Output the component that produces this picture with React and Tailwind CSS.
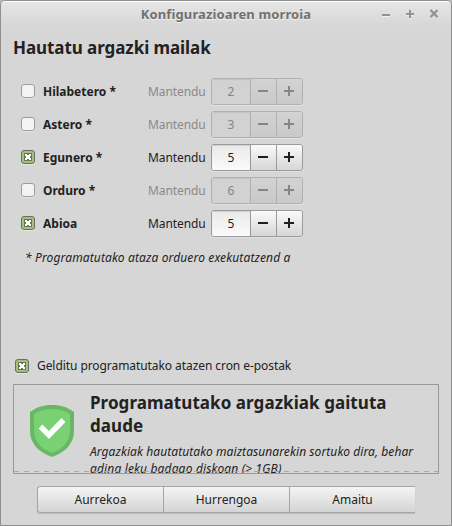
import React from "react";

function Checkbox({ checked }) {
  return (
    <span
      className={
        "flex h-[14px] w-[14px] shrink-0 items-center justify-center rounded-[3px] border shadow-[0_1px_0_#e6e6e6] " +
        (checked ? "border-[#6b6b6b] bg-[#a3c07f]" : "border-[#9c9c9c] bg-[#f3f3f3]")
      }
    >
      {checked && (
        <svg width="12" height="12" viewBox="0 0 12 12" shapeRendering="crispEdges">
          <rect x="2" y="2" width="8" height="8" fill="#68784f" />
          <path d="M3 3h2v1h2V3h2v2H8v2h1v2H7V8H5v1H3V7h1V5H3z" fill="#fff" />
        </svg>
      )}
    </span>
  );
}

function SpinButton({ value, disabled }) {
  const edge = disabled ? "border-[#b0b0b0]" : "border-[#9a9a9a]";
  const ink = disabled ? "#858585" : "#1e1e1e";
  const face = disabled
    ? "bg-gradient-to-b from-[#d3d3d3] to-[#c9c9c9]"
    : "bg-gradient-to-b from-[#fafafa] to-[#d6d6d6]";
  return (
    <div className={"flex h-[27px] w-[92px] overflow-hidden rounded-[3px] border shadow-[0_1px_0_#e2e2e2] " + edge}>
      <div
        className={
          "flex w-[38px] items-center justify-center " +
          (disabled
            ? "bg-[#d2d2d2] text-[#858585] shadow-[inset_0_1px_1px_#c3c3c3]"
            : "bg-gradient-to-b from-[#e9e9e9] to-[#fbfbfb] text-[#222] shadow-[inset_0_1px_1px_#d0d0d0]")
        }
      >
        {value}
      </div>
      <div className={"flex w-[26px] items-start border-l pl-[6px] pt-[6px] " + edge + " " + face}>
        <svg width="12" height="12" viewBox="0 0 12 12" shapeRendering="crispEdges">
          <rect x="1" y="5" width="10" height="2" fill={ink} />
        </svg>
      </div>
      <div className={"flex w-[26px] items-start border-l pl-[6px] pt-[6px] " + edge + " " + face}>
        <svg width="12" height="12" viewBox="0 0 12 12" shapeRendering="crispEdges">
          <path d="M1 5h4V1h2v4h4v2H7v4H5V7H1z" fill={ink} />
        </svg>
      </div>
    </div>
  );
}

const levels = [
  { label: "Hilabetero *", keep: 2, on: false },
  { label: "Astero *", keep: 3, on: false },
  { label: "Egunero *", keep: 5, on: true },
  { label: "Orduro *", keep: 6, on: false },
  { label: "Abioa", keep: 5, on: true },
];

function Shield() {
  return (
    <svg width="44" height="52" viewBox="0 0 44 52">
      <path d="M22 0C31 0 38 2.500 44 7v19c0 13-10 22-22 26C10 48 0 39 0 26V7C6 2.500 13 0 22 0z" fill="#69b764" />
      <path d="M22 4c7 0 13 1.700 18 5v17c0 11-8 18-18 22C12 44 4 37 4 26V9c5-3.300 11-5 18-5z" fill="#79d174" />
      <path d="M10.500 21.500l8.500 8.500L33.500 15" fill="none" stroke="#fff" strokeWidth="5.500" />
    </svg>
  );
}

export default function App() {
  return (
    <div className="h-[526px] w-[452px] bg-[#b8b8b8] font-['Noto_Sans',sans-serif] text-[12px] leading-[17px] text-[#222]">
      <div className="flex h-full flex-col overflow-hidden whitespace-nowrap rounded-t-[5px] border border-[#8f8f8f] bg-[#d6d6d6]">
        <header className="flex h-[26px] shrink-0 items-center border-t border-white bg-gradient-to-b from-[#e6e6e6] to-[#d6d6d6] pr-[11px]">
          <h1 className="flex-1 pl-[71px] text-center text-[13px] font-bold tracking-[0.13px] text-[#707070] [text-shadow:0_1px_0_#f0f0f0]">
            Konfigurazioaren morroia
          </h1>
          <svg className="-mt-px" width="60" height="14" viewBox="0 0 60 14" fill="none" stroke="#929292">
            <path d="M2 9h8M26 8h8M30 4v8" stroke="#f0f0f0" strokeWidth="2" />
            <path d="M2 8h8M26 7h8M30 3v8" strokeWidth="2" />
            <path d="M50.500 3l7 7M57.500 3l-7 7" strokeWidth="2.200" />
          </svg>
        </header>
        <h2 className="mt-[9px] h-[24px] pl-[12px] text-[17px] font-bold leading-[24px] tracking-[-0.07px]">
          Hautatu argazki mailak
        </h2>
        <div className="mt-[18px] flex flex-col gap-[6px] pl-[20px]">
          {levels.map((l) => (
            <div key={l.label} className="flex h-[27px] items-center">
              <div className="h-full pt-[6px]">
                <Checkbox checked={l.on} />
              </div>
              <span className="w-[105px] pl-[8px] font-bold">{l.label}</span>
              <span className={"w-[71px] pl-[8px] tracking-[-0.1px] " + (l.on ? "text-[#222]" : "text-[#8a8a8a]")}>
                Mantendu
              </span>
              <SpinButton value={l.keep} disabled={!l.on} />
            </div>
          ))}
        </div>
        <p className="mt-[12px] pl-[24px] italic tracking-[0.13px]">* Programatutako ataza orduero exekutatzend a</p>
        <div className="mt-[91px] flex h-[17px] items-start pl-[14px]">
          <div className="pt-[2px]">
            <Checkbox checked />
          </div>
          <span className="pl-[8px] tracking-[-0.07px]">Gelditu programatutako atazen cron e-postak</span>
        </div>
        <section className="relative ml-[12px] mt-[10px] flex h-[90px] w-[426px] shrink-0 overflow-hidden border border-[#999] pl-[16px]">
          <svg className="absolute bottom-[1px] left-0" width="424" height="1">
            <path d="M0 .5h424" stroke="#aaa" strokeDasharray="5 5" />
          </svg>
          <div className="mt-[20px] w-[60px] shrink-0">
            <Shield />
          </div>
          <div className="pt-[6px]">
            <h3 className="text-[17px] font-bold leading-[23px] tracking-[0.06px]">
              Programatutako argazkiak gaituta
              <br />
              daude
            </h3>
            <p className="mt-[6px] italic tracking-[0.08px]">
              Argazkiak hautatutako maiztasunarekin sortuko dira, behar
              <br />
              <span className="tracking-[0.15px]">adina leku badago diskoan (&gt; 1GB)</span>
            </p>
          </div>
        </section>
        <footer className="ml-[36px] mt-[12px] flex h-[27px] w-[378px] shrink-0 rounded-l-[3px] border border-r-0 border-[#a5a5a5] bg-gradient-to-b from-[#f5f5f5] to-[#d4d4d4] shadow-[0_1px_1px_#bcbcbc]">
          <button className="w-[125px]">Aurrekoa</button>
          <button className="w-[126px] border-l border-[#a5a5a5]">Hurrengoa</button>
          <button className="w-[126px] border-l border-[#a5a5a5]">Amaitu</button>
        </footer>
      </div>
    </div>
  );
}
